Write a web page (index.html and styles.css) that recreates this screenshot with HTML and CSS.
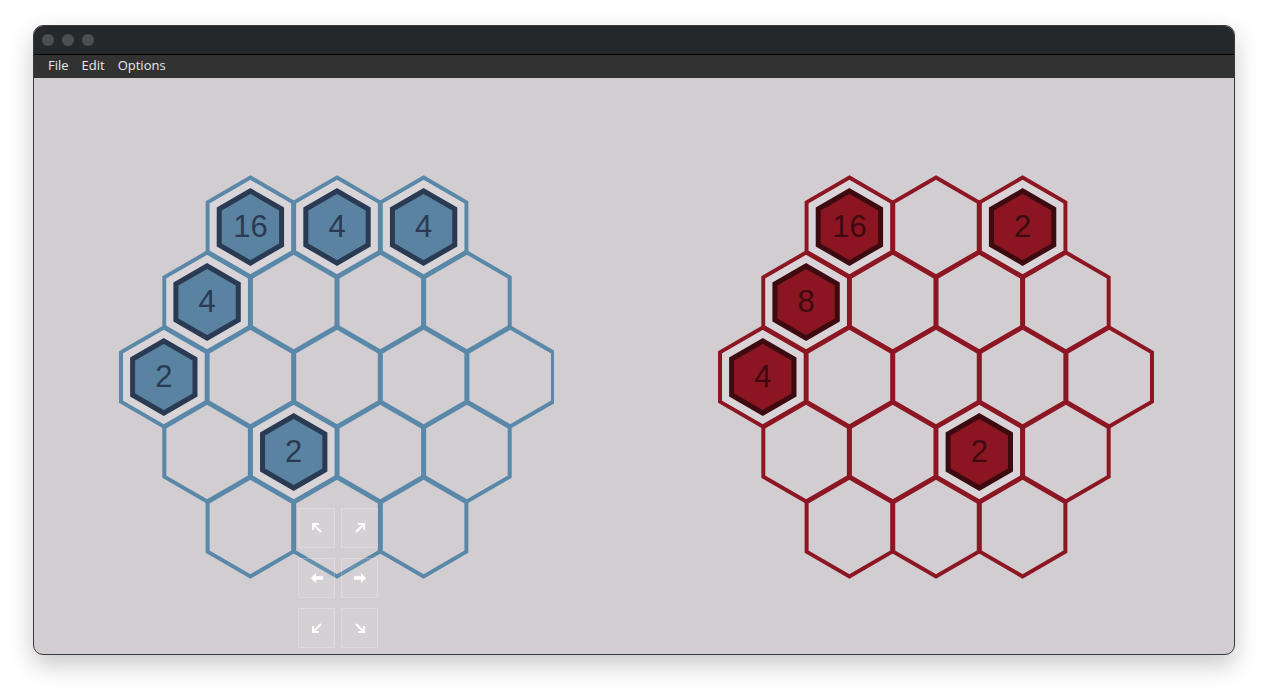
FILE: index.html
```html
<!DOCTYPE html>
<html lang="en-US">
<head>
<meta charset="UTF-8">
<title>Hex 2048</title>
<link rel="stylesheet" href="styles.css">
</head>
<body>
  <div class="window">
    <div class="titlebar">
      <span class="light"></span>
      <span class="light"></span>
      <span class="light"></span>
    </div>
    <div class="menubar">
      <span class="menu-item">File</span>
      <span class="menu-item">Edit</span>
      <span class="menu-item">Options</span>
    </div>

    <div class="content">
      <svg width="0" height="0" class="defs">
        <defs>
          <polygon id="hex" points="0,-49.4 42.78,-24.7 42.78,24.7 0,49.4 -42.78,24.7 -42.78,-24.7"/>
          <polygon id="ring" points="0,-46.8 40.53,-23.4 40.53,23.4 0,46.8 -40.53,23.4 -40.53,-23.4"/>
          <polygon id="inner" points="0,-36 31.18,-18 31.18,18 0,36 -31.18,18 -31.18,-18"/>
        </defs>
      </svg>

      <!-- player board -->
      <div class="half">
        <svg class="board blue" width="440" height="420" viewBox="-223 -210 440 420">
          <use class="cell" href="#hex" x="-86.6" y="-150"/>
          <use class="cell" href="#hex" x="0" y="-150"/>
          <use class="cell" href="#hex" x="86.6" y="-150"/>
          <use class="cell" href="#hex" x="-129.9" y="-75"/>
          <use class="cell" href="#hex" x="-43.3" y="-75"/>
          <use class="cell" href="#hex" x="43.3" y="-75"/>
          <use class="cell" href="#hex" x="129.9" y="-75"/>
          <use class="cell" href="#hex" x="-173.2" y="0"/>
          <use class="cell" href="#hex" x="-86.6" y="0"/>
          <use class="cell" href="#hex" x="0" y="0"/>
          <use class="cell" href="#hex" x="86.6" y="0"/>
          <use class="cell" href="#hex" x="173.2" y="0"/>
          <use class="cell" href="#hex" x="-129.9" y="75"/>
          <use class="cell" href="#hex" x="-43.3" y="75"/>
          <use class="cell" href="#hex" x="43.3" y="75"/>
          <use class="cell" href="#hex" x="129.9" y="75"/>
          <use class="cell" href="#hex" x="-86.6" y="150"/>
          <use class="cell" href="#hex" x="0" y="150"/>
          <use class="cell" href="#hex" x="86.6" y="150"/>

          <g class="tile" transform="translate(-86.6 -150)"><use class="ring" href="#ring"/><use class="inner" href="#inner"/><text y="-1">16</text></g>
          <g class="tile" transform="translate(0 -150)"><use class="ring" href="#ring"/><use class="inner" href="#inner"/><text y="-1">4</text></g>
          <g class="tile" transform="translate(86.6 -150)"><use class="ring" href="#ring"/><use class="inner" href="#inner"/><text y="-1">4</text></g>
          <g class="tile" transform="translate(-129.9 -75)"><use class="ring" href="#ring"/><use class="inner" href="#inner"/><text y="-1">4</text></g>
          <g class="tile" transform="translate(-173.2 0)"><use class="ring" href="#ring"/><use class="inner" href="#inner"/><text y="-1">2</text></g>
          <g class="tile" transform="translate(-43.3 75)"><use class="ring" href="#ring"/><use class="inner" href="#inner"/><text y="-1">2</text></g>
        </svg>

        <div class="pad">
          <div class="key">
            <svg width="12" height="12" viewBox="0 0 12 12"><path d="M10 10 L2.5 2.5 M2 8 V2 H8"/></svg>
          </div>
          <div class="key">
            <svg width="12" height="12" viewBox="0 0 12 12"><path d="M2 10 L9.5 2.5 M4 2 H10 V8"/></svg>
          </div>
          <div class="key">
            <svg width="12" height="10" viewBox="0 0 12 10"><polygon class="solid" points="0,5 5,0 5,3.2 12,3.2 12,6.8 5,6.8 5,10"/></svg>
          </div>
          <div class="key">
            <svg width="12" height="10" viewBox="0 0 12 10"><polygon class="solid" points="12,5 7,0 7,3.2 0,3.2 0,6.8 7,6.8 7,10"/></svg>
          </div>
          <div class="key">
            <svg width="12" height="12" viewBox="0 0 12 12"><path d="M10 2 L2.5 9.5 M2 4 V10 H8"/></svg>
          </div>
          <div class="key">
            <svg width="12" height="12" viewBox="0 0 12 12"><path d="M2 2 L9.5 9.5 M4 10 H10 V4"/></svg>
          </div>
        </div>
      </div>

      <!-- opponent board -->
      <div class="half">
        <svg class="board red" width="440" height="420" viewBox="-222 -210 440 420">
          <use class="cell" href="#hex" x="-86.6" y="-150"/>
          <use class="cell" href="#hex" x="0" y="-150"/>
          <use class="cell" href="#hex" x="86.6" y="-150"/>
          <use class="cell" href="#hex" x="-129.9" y="-75"/>
          <use class="cell" href="#hex" x="-43.3" y="-75"/>
          <use class="cell" href="#hex" x="43.3" y="-75"/>
          <use class="cell" href="#hex" x="129.9" y="-75"/>
          <use class="cell" href="#hex" x="-173.2" y="0"/>
          <use class="cell" href="#hex" x="-86.6" y="0"/>
          <use class="cell" href="#hex" x="0" y="0"/>
          <use class="cell" href="#hex" x="86.6" y="0"/>
          <use class="cell" href="#hex" x="173.2" y="0"/>
          <use class="cell" href="#hex" x="-129.9" y="75"/>
          <use class="cell" href="#hex" x="-43.3" y="75"/>
          <use class="cell" href="#hex" x="43.3" y="75"/>
          <use class="cell" href="#hex" x="129.9" y="75"/>
          <use class="cell" href="#hex" x="-86.6" y="150"/>
          <use class="cell" href="#hex" x="0" y="150"/>
          <use class="cell" href="#hex" x="86.6" y="150"/>

          <g class="tile" transform="translate(-86.6 -150)"><use class="ring" href="#ring"/><use class="inner" href="#inner"/><text y="-1">16</text></g>
          <g class="tile" transform="translate(86.6 -150)"><use class="ring" href="#ring"/><use class="inner" href="#inner"/><text y="-1">2</text></g>
          <g class="tile" transform="translate(-129.9 -75)"><use class="ring" href="#ring"/><use class="inner" href="#inner"/><text y="-1">8</text></g>
          <g class="tile" transform="translate(-173.2 0)"><use class="ring" href="#ring"/><use class="inner" href="#inner"/><text y="-1">4</text></g>
          <g class="tile" transform="translate(43.3 75)"><use class="ring" href="#ring"/><use class="inner" href="#inner"/><text y="-1">2</text></g>
        </svg>
      </div>
    </div>
  </div>
</body>
</html>
```

FILE: styles.css
```css
	html, body {
		margin: 0px;
		padding: 0px;
		background: #ffffff;
	}

	body {
		padding: 25px 33px 41px 33px;
		font-family: "Liberation Sans", Arial, sans-serif;
	}

	/* window frame */

	.window {
		height: 630px;
		box-sizing: border-box;
		border: 1px solid #3a3a3a;
		border-radius: 10px;
		overflow: hidden;
		display: flex;
		flex-direction: column;
		background: #d1cdd1;
		box-shadow: 0 10px 24px rgba(0,0,0,.22);
	}

	.titlebar {
		height: 28px;
		background: #24282b;
		border-bottom: 1px solid #000;
		display: flex;
		align-items: center;
		gap: 8px;
		padding-left: 8px;
	}
	.light {
		width: 12px;
		height: 12px;
		border-radius: 100%;
		background: #4b4f52;
	}

	.menubar {
		height: 23px;
		box-sizing: border-box;
		padding: 0 0 4px 14px;
		background: #323232;
		display: flex;
		align-items: center;
		gap: 13px;
	}
	.menu-item {
		color: #e8e8e8;
		font-family: "Open Sans", "Liberation Sans", sans-serif;
		font-size: 13px;
		font-weight: 500;
	}

	/* boards */

	.content {
		flex: 1;
		display: flex;
	}
	.defs {
		position: absolute;
	}
	.half {
		position: relative;
		flex: 1;
		display: flex;
		justify-content: center;
		align-items: flex-start;
		padding-top: 89px;
	}

	.board use.cell {
		fill: none;
		stroke-width: 4;
	}
	.board use.ring {
		fill: #d8d4d8;
	}
	.board use.inner {
		stroke-width: 5;
	}
	.board text {
		font-family: "Liberation Sans", Arial, sans-serif;
		font-size: 31px;
		text-anchor: middle;
		dominant-baseline: central;
	}

	.blue use.cell { stroke: #5a88a8; }
	.blue use.inner { fill: #5a83a2; stroke: #2a3a52; }
	.blue text { fill: #2a3a52; }

	.red use.cell { stroke: #8d1623; }
	.red use.inner { fill: #8b1622; stroke: #3d0a10; }
	.red text { fill: #3d0a10; }

	/* arrow pad over the player board */

	.pad {
		position: absolute;
		left: 264px;
		top: 430px;
		display: grid;
		grid-template-columns: 37px 37px;
		grid-auto-rows: 40px;
		column-gap: 6px;
		row-gap: 10px;
	}
	.key {
		box-sizing: border-box;
		border: 1px solid rgba(255,255,255,.22);
		background: rgba(255,255,255,.07);
		display: flex;
		align-items: center;
		justify-content: center;
	}
	.key path {
		fill: none;
		stroke: #fff;
		stroke-width: 2;
	}
	.key .solid {
		fill: #fff;
	}
```
